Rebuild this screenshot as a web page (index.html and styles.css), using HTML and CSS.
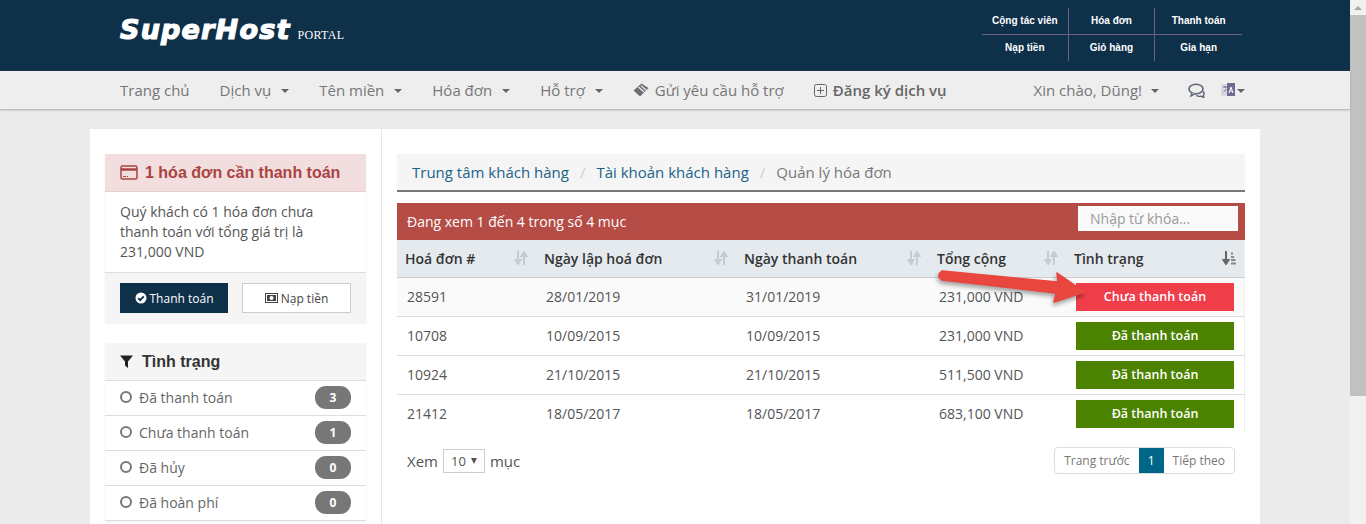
FILE: index.html
```html
<!DOCTYPE html>
<html lang="vi">
<head>
    <meta charset="UTF-8">
    <meta name="viewport" content="width=device-width, initial-scale=1.0">
    <title>Quản lý hóa đơn - SuperHost Portal</title>
    <link rel="stylesheet" href="styles.css">
</head>
<body>
<div class="page">
    <header class="topbar">
        <div class="logo"><span class="logo-name">SuperHost</span><span class="logo-sub">PORTAL</span></div>
        <div class="quick-links">
            <a>Cộng tác viên</a><a>Hóa đơn</a><a>Thanh toán</a>
            <a>Nạp tiền</a><a>Giỏ hàng</a><a>Gia hạn</a>
        </div>
    </header>

    <nav class="menu">
        <a>Trang chủ</a>
        <a>Dịch vụ<i class="caret"></i></a>
        <a>Tên miền<i class="caret"></i></a>
        <a>Hóa đơn<i class="caret"></i></a>
        <a>Hỗ trợ<i class="caret"></i></a>
        <a>
            <svg class="menu-icon" width="16" height="16" viewBox="0 0 16 16"><path d="M0.500 8.500 8.500 1.500l7 4.500L7 14.500z" fill="#6f6f6f"/><path d="M5.500 5l5.500 5M8 3.600l5 4.400" stroke="#eee" stroke-width="1.200"/></svg>
            Gửi yêu cầu hỗ trợ
        </a>
        <a class="menu-strong">
            <svg class="menu-icon" width="13" height="13" viewBox="0 0 13 13"><rect x="0.500" y="0.500" width="12" height="12" rx="2" fill="none" stroke="#666"/><path d="M6.500 3v7M3 6.500h7" stroke="#666"/></svg>
            Đăng ký dịch vụ
        </a>
        <div class="menu-right">
            <a>Xin chào, Dũng!<i class="caret"></i></a>
            <svg class="chat-icon" width="18" height="15" viewBox="0 0 18 15"><path d="M15 8.500c1.500 1.500 1.400 3 .3 4l.5 2-3-1.300c-2 .5-3.500 0-4.500-1" fill="none" stroke="#5c6478" stroke-width="1.400"/><ellipse cx="8" cy="6" rx="7" ry="4.800" fill="#eee" stroke="#5c6478" stroke-width="1.600"/><path d="M4 10l-1 3 4-2.400" fill="#eee" stroke="#5c6478" stroke-width="1.400"/></svg>
            <span class="lang">
                <svg width="16" height="16" viewBox="0 0 16 16"><rect x="1" y="2" width="8" height="12" fill="#d8d6de"/><rect x="7" y="1" width="8" height="13" fill="#6d6a94"/><path d="M9 11l2-6 2 6M10 9h2" stroke="#fff" fill="none"/><path d="M3 5h4M5 4v2M3.500 10l3-3" stroke="#77748c"/></svg>
                <i class="caret"></i>
            </span>
        </div>
    </nav>

    <main class="wrap">
        <aside class="sidebar">
            <section class="panel panel-alert">
                <h3 class="panel-head">
                    <svg width="18" height="15" viewBox="0 0 18 15"><rect x="1" y="1" width="16" height="13" rx="1.500" fill="none" stroke="#a94442" stroke-width="1.500"/><path d="M1 4.500h16" stroke="#a94442" stroke-width="2.500"/><path d="M3 11.500h3M7 11.500h1" stroke="#a94442"/></svg>
                    1 hóa đơn cần thanh toán
                </h3>
                <p class="panel-text">Quý khách có 1 hóa đơn chưa thanh toán với tổng giá trị là 231,000 VND</p>
                <div class="panel-foot">
                    <a class="btn btn-dark">
                        <svg width="12" height="12" viewBox="0 0 12 12"><circle cx="6" cy="6" r="5.500" fill="#fff"/><path d="M3.200 6.200l2 2 3.600-3.800" fill="none" stroke="#0e3049" stroke-width="1.800"/></svg>
                        Thanh toán
                    </a>
                    <a class="btn btn-light">
                        <svg width="13" height="10" viewBox="0 0 13 10"><rect x="0.500" y="0.500" width="12" height="9" fill="none" stroke="#444"/><rect x="2" y="2" width="9" height="6" fill="#444"/><circle cx="6.500" cy="5" r="2" fill="#fff"/></svg>
                        Nạp tiền
                    </a>
                </div>
            </section>

            <section class="panel panel-filter">
                <h3 class="panel-head">
                    <svg width="13" height="13" viewBox="0 0 13 13"><path d="M0 .5h13L8 6.500V13L5 10.500v-4z" fill="#222"/></svg>
                    Tình trạng
                </h3>
                <ul class="filter-list">
                    <li><i class="radio"></i>Đã thanh toán<b class="badge">3</b></li>
                    <li><i class="radio"></i>Chưa thanh toán<b class="badge">1</b></li>
                    <li><i class="radio"></i>Đã hủy<b class="badge">0</b></li>
                    <li><i class="radio"></i>Đã hoàn phí<b class="badge">0</b></li>
                </ul>
            </section>
        </aside>

        <div class="content">
            <div class="breadcrumb">
                <a>Trung tâm khách hàng</a><span class="sep">/</span><a>Tài khoản khách hàng</a><span class="sep">/</span><span class="current">Quản lý hóa đơn</span>
            </div>

            <div class="table-head">
                <span>Đang xem 1 đến 4 trong số 4 mục</span>
                <input class="search" type="text" placeholder="Nhập từ khóa...">
            </div>

            <div class="table-box">
                <table class="invoices">
                    <thead>
                        <tr>
                            <th class="col-id">Hoá đơn #<svg class="sort" width="14" height="14" viewBox="0 0 14 14"><path d="M4 0v10M1.500 9l2.500 4 2.500-4zM10 14V4M7.500 5l2.500-4 2.500 4z" fill="#c6ccd1" stroke="#c6ccd1" stroke-width="2"/></svg></th>
                            <th class="col-date">Ngày lập hoá đơn<svg class="sort" width="14" height="14" viewBox="0 0 14 14"><path d="M4 0v10M1.500 9l2.500 4 2.500-4zM10 14V4M7.500 5l2.500-4 2.500 4z" fill="#c6ccd1" stroke="#c6ccd1" stroke-width="2"/></svg></th>
                            <th class="col-date2">Ngày thanh toán<svg class="sort" width="14" height="14" viewBox="0 0 14 14"><path d="M4 0v10M1.500 9l2.500 4 2.500-4zM10 14V4M7.500 5l2.500-4 2.500 4z" fill="#c6ccd1" stroke="#c6ccd1" stroke-width="2"/></svg></th>
                            <th class="col-total">Tổng cộng<svg class="sort" width="14" height="14" viewBox="0 0 14 14"><path d="M4 0v10M1.500 9l2.500 4 2.500-4zM10 14V4M7.500 5l2.500-4 2.500 4z" fill="#c6ccd1" stroke="#c6ccd1" stroke-width="2"/></svg></th>
                            <th class="col-status">Tình trạng<svg class="sort" width="14" height="14" viewBox="0 0 14 14"><path d="M4 0v10M1.500 9l2.500 4 2.500-4z" fill="#666" stroke="#666" stroke-width="2"/><path d="M9 2.500h2M9 6h3M9 9h4.500M9 12.500h5" stroke="#888" stroke-width="2"/></svg></th>
                        </tr>
                    </thead>
                    <tbody>
                        <tr class="row-first">
                            <td>28591</td><td>28/01/2019</td><td>31/01/2019</td><td>231,000 VND</td>
                            <td><span class="status status-unpaid">Chưa thanh toán</span></td>
                        </tr>
                        <tr>
                            <td>10708</td><td>10/09/2015</td><td>10/09/2015</td><td>231,000 VND</td>
                            <td><span class="status status-paid">Đã thanh toán</span></td>
                        </tr>
                        <tr>
                            <td>10924</td><td>21/10/2015</td><td>21/10/2015</td><td>511,500 VND</td>
                            <td><span class="status status-paid">Đã thanh toán</span></td>
                        </tr>
                        <tr class="row-last">
                            <td>21412</td><td>18/05/2017</td><td>18/05/2017</td><td>683,100 VND</td>
                            <td><span class="status status-paid">Đã thanh toán</span></td>
                        </tr>
                    </tbody>
                </table>

                <svg class="callout" width="152" height="38" viewBox="0 0 152 38">
                    <path d="M5 3 L5 12 L119 25 L117 34 L148 24 L120 5 L121 14 Z" fill="#e8463e" stroke="#e8463e" stroke-width="1.500" stroke-linejoin="round"/>
                    <circle cx="6" cy="7.500" r="4.800" fill="#e8463e"/>
                </svg>
            </div>

            <div class="table-foot">
                <div class="page-size">Xem <span class="select">10<i class="select-arrow"></i></span> mục</div>
                <div class="pager"><a>Trang trước</a><a class="active">1</a><a>Tiếp theo</a></div>
            </div>
        </div>
    </main>
</div>

<div class="scrollbar">
    <div class="scroll-up"><i></i></div>
    <div class="scroll-thumb"></div>
</div>
</body>
</html>
```

FILE: styles.css
```css
* {
    box-sizing: border-box;
}
html, body {
    height: 100%;
    overflow: hidden;
}
body {
    margin: 0;
    display: flex;
    background-color: #ebebeb;
    font-family: "Open Sans", sans-serif;
    font-size: 14px;
    color: #555;
}
.page {
    flex: 1;
    min-width: 0;
}

/* top bar */
.topbar {
    height: 71px;
    background-color: #0e3049;
    padding: 8px 108px 0 120px;
    display: flex;
    justify-content: space-between;
}
.logo {
    display: flex;
    align-items: baseline;
    margin-top: 6px;
    color: #fff;
}
.logo-name {
    font-family: "DejaVu Sans", sans-serif;
    font-size: 27px;
    font-weight: bold;
    font-style: italic;
    letter-spacing: 1.2px;
    -webkit-text-stroke: 1.2px #fff;
}
.logo-sub {
    font-family: "Liberation Serif", serif;
    font-size: 12px;
    letter-spacing: 0.3px;
    margin-left: 7px;
}
.quick-links {
    width: 260px;
    height: 53px;
    display: grid;
    grid-template-columns: repeat(3, 1fr);
    grid-template-rows: 27px 26px;
    font-family: "Liberation Sans", sans-serif;
    font-size: 10px;
    font-weight: bold;
    color: #fff;
}
.quick-links a {
    display: flex;
    align-items: center;
    justify-content: center;
    padding-bottom: 2px;
    border-right: 1px solid #6b5f7f;
}
.quick-links a:nth-child(3n) {
    border-right: 0;
}
.quick-links a:nth-child(-n+3) {
    border-bottom: 1px solid #6b5f7f;
}

/* menu */
.menu {
    height: 38px;
    background-color: #eee;
    box-shadow: 0 1px 2px #aaa;
    padding: 0 105px 0 120px;
    display: flex;
    align-items: center;
    gap: 30px;
    font-size: 15px;
    color: #767676;
    position: relative;
}
.menu a {
    display: flex;
    align-items: center;
}
.menu-strong {
    font-weight: 600;
    color: #666;
}
.menu-icon {
    margin-right: 6px;
}
.caret {
    display: inline-block;
    width: 0;
    height: 0;
    margin-left: 10px;
    margin-top: 2px;
    border-top: 4px solid #666;
    border-left: 4.5px solid transparent;
    border-right: 4.5px solid transparent;
}
.menu-right {
    margin-left: auto;
    display: flex;
    align-items: center;
}
.menu-right .caret {
    margin-left: 9px;
}
.chat-icon {
    margin-left: 29px;
}
.lang {
    display: flex;
    align-items: center;
    margin-left: 14px;
}
.menu-right .lang .caret {
    margin-left: 1px;
    border-left-width: 4px;
    border-right-width: 4px;
}

/* white card */
.wrap {
    width: 1170px;
    height: 500px;
    margin: 20px 0 0 90px;
    background-color: #fff;
    display: flex;
}
.sidebar {
    width: 292px;
    padding: 25px 15px 0;
    border-right: 1px solid #e7e7e7;
}
.panel {
    margin-bottom: 20px;
    box-shadow: 0 1px 2px rgba(0, 0, 0, 0.06);
}
.panel-head {
    margin: 0;
    height: 38px;
    padding-left: 15px;
    display: flex;
    align-items: center;
    gap: 7px;
    font-family: "Liberation Sans", sans-serif;
    font-size: 16px;
    font-weight: bold;
}
.panel-alert .panel-head {
    background-color: #f2dede;
    border-bottom: 1px solid #ebccd1;
    color: #a94442;
}
.panel-text {
    margin: 0;
    padding: 10px 15px;
    height: 80px;
    line-height: 20px;
    font-size: 14px;
}
.panel-foot {
    height: 51px;
    background-color: #f5f5f5;
    border-top: 1px solid #ddd;
    padding: 10px 15px 0;
    display: flex;
    justify-content: space-between;
}
.btn {
    height: 30px;
    display: flex;
    align-items: center;
    justify-content: center;
    gap: 3px;
    font-size: 12px;
}
.btn-dark {
    width: 108px;
    background-color: #0e3049;
    color: #fff;
}
.btn-light {
    width: 109px;
    background-color: #fff;
    border: 1px solid #ccc;
    color: #444;
}
.panel-filter .panel-head {
    background-color: #f5f5f5;
    border-bottom: 1px solid #ddd;
    color: #333;
    gap: 9px;
}
.filter-list {
    list-style: none;
    margin: 0;
    padding: 0;
}
.filter-list li {
    height: 35px;
    padding: 0 15px 2px;
    border-bottom: 1px solid #ddd;
    display: flex;
    align-items: center;
    color: #666;
}
.radio {
    width: 12px;
    height: 12px;
    margin-right: 7px;
    border: 2px solid #777;
    border-radius: 50%;
}
.badge {
    margin-left: auto;
    width: 36px;
    height: 23px;
    border-radius: 11px;
    background-color: #777;
    color: #fff;
    font-size: 12px;
    text-align: center;
    line-height: 23px;
}

/* main column */
.content {
    width: 848px;
    margin-left: 15px;
    padding-top: 25px;
}
.breadcrumb {
    height: 38px;
    padding: 0 15px;
    background-color: #f5f5f5;
    border-bottom: 2px solid #777;
    display: flex;
    align-items: center;
    font-size: 15px;
    color: #1a6288;
}
.sep {
    margin: 0 11px;
    color: #ccc;
}
.current {
    color: #777;
}
.table-head {
    height: 37px;
    margin-top: 11px;
    padding: 0 7px 1px 10px;
    background-color: #b54d46;
    color: #fff;
    display: flex;
    align-items: center;
    justify-content: space-between;
}
.search {
    width: 160px;
    height: 25px;
    padding: 0 10px;
    align-self: flex-start;
    margin-top: 3px;
    border: 2px solid #fff;
    background-color: #f9f9f9;
    font-family: "Open Sans", sans-serif;
    font-size: 14px;
}
.search::placeholder {
    color: #999;
    opacity: 1;
}
.table-box {
    position: relative;
}
.invoices {
    width: 100%;
    table-layout: fixed;
    border-collapse: collapse;
    border-right: 1px solid #eee;
}
.col-id { width: 139px; }
.col-date { width: 200px; }
.col-date2 { width: 193px; }
.col-total { width: 137px; }
.invoices th {
    height: 37px;
    padding: 0 8px;
    position: relative;
    background-color: #e5eaee;
    border-bottom: 1px solid #ccc;
    text-align: left;
    font-weight: 600;
    color: #333;
}
.sort {
    position: absolute;
    right: 8px;
    top: 11px;
}
.invoices td {
    height: 39px;
    padding: 0 10px;
    border-bottom: 1px solid #ddd;
}
.invoices .row-last td {
    border-bottom: 0;
}
.row-first td {
    background-color: #fafafa;
}
.status {
    display: block;
    height: 28px;
    line-height: 28px;
    text-align: center;
    color: #fff;
    font-size: 12.5px;
    font-weight: 600;
}
.status-unpaid {
    background-color: #ef3e4a;
}
.status-paid {
    background-color: #4b8200;
}
.callout {
    position: absolute;
    left: 540px;
    top: 28px;
    filter: drop-shadow(-1px 3px 2px rgba(0, 0, 0, 0.35));
}
.table-foot {
    display: flex;
    justify-content: space-between;
    align-items: center;
    padding: 15px 10px 0;
}
.page-size {
    display: flex;
    align-items: center;
    gap: 5px;
    font-size: 15px;
}
.select {
    width: 42px;
    height: 24px;
    padding-left: 7px;
    border: 1px solid #ccc;
    display: flex;
    align-items: center;
    justify-content: space-between;
    font-size: 13px;
}
.select-arrow {
    width: 0;
    height: 0;
    margin-right: 7px;
    border-top: 6px solid #555;
    border-left: 3px solid transparent;
    border-right: 3px solid transparent;
}
.pager {
    display: flex;
    height: 27px;
    border: 1px solid #ddd;
    border-radius: 4px;
    font-size: 12px;
    color: #777;
    margin-top: -1px;
}
.pager a {
    display: flex;
    align-items: center;
    padding: 0 9px;
}
.pager .active {
    width: 25px;
    padding: 0;
    justify-content: center;
    background-color: #006687;
    color: #fff;
}

/* browser scrollbar */
.scrollbar {
    width: 16px;
    height: 100%;
    flex-shrink: 0;
    background-color: #f1f1f1;
}
.scroll-up {
    height: 15px;
    display: flex;
    align-items: center;
    justify-content: center;
}
.scroll-up i {
    width: 0;
    height: 0;
    border-bottom: 4px solid #a3a3a3;
    border-left: 4px solid transparent;
    border-right: 4px solid transparent;
}
.scroll-thumb {
    height: 381px;
    background-color: #c1c1c1;
}
```
